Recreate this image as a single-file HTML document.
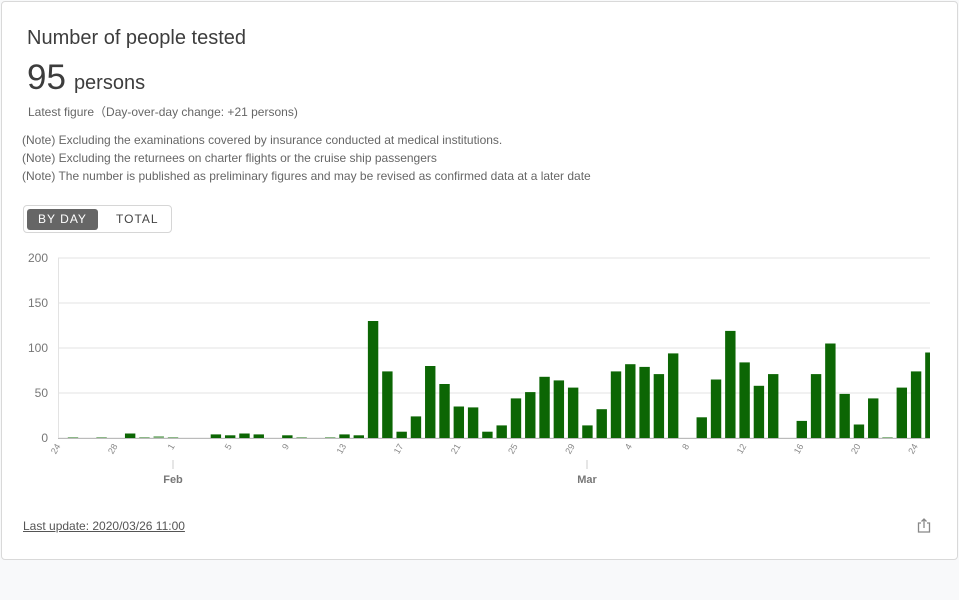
<!DOCTYPE html>
<html><head><meta charset="utf-8"><style>
body{margin:0;width:959px;height:600px;background:#f8f9fa;font-family:"Liberation Sans",Arial,sans-serif;overflow:hidden;position:relative}
.card{position:absolute;left:1px;top:1px;width:955px;height:557px;background:#fff;border:1px solid #d9d9d9;border-radius:4px}
.t{position:absolute;left:25px;top:25px;font-size:20px;color:#3d3d3d}
.n{position:absolute;left:25px;top:56px;font-size:35px;color:#3d3d3d}
.n span{font-size:20px;margin-left:8px}
.lf{position:absolute;left:26px;top:101px;font-size:12px;color:#666}
.notes{position:absolute;left:20px;top:129px;font-size:12px;color:#666;line-height:18px}
.tg{position:absolute;left:21px;top:203px;width:149px;height:28px;border:1px solid #d6d6d6;border-radius:4px;box-sizing:border-box}
.b1{position:absolute;left:3px;top:3px;width:71px;height:21px;background:#666;border-radius:3px;color:#fff;font-size:12px;letter-spacing:1px;text-align:center;line-height:21px}
.b2{position:absolute;left:92px;top:3px;font-size:12px;letter-spacing:1px;color:#444;line-height:21px}
.lu{position:absolute;left:21px;top:517px;font-size:12px;color:#555;text-decoration:underline}
</style></head><body>
<div class="card">
<div class="t">Number of people tested</div>
<div class="n">95<span>persons</span></div>
<div class="lf">Latest figure（Day-over-day change: +21 persons)</div>
<div class="notes">(Note) Excluding the examinations covered by insurance conducted at medical institutions.<br>(Note) Excluding the returnees on charter flights or the cruise ship passengers<br>(Note) The number is published as preliminary figures and may be revised as confirmed data at a later date</div>
<div class="tg"><div class="b1">BY DAY</div><div class="b2">TOTAL</div></div>
<div class="lu">Last update: 2020/03/26 11:00</div>
<svg style="position:absolute;left:914px;top:515px" width="16" height="18" viewBox="0 0 16 18"><path d="M5 6H2.5v9h11V6H11" fill="none" stroke="#888" stroke-width="1.3"/><path d="M8 11V2M5.5 4.5L8 2l2.5 2.5" fill="none" stroke="#888" stroke-width="1.3"/></svg>
</div>
<svg id="c" style="position:absolute;left:0;top:0" width="959" height="500"></svg>
<script>
var v=[0,1,0,1,0,5,1,2,1,0,0,4,3,5,4,0,3,1,0,1,4,3,130,74,7,24,80,60,35,34,7,14,44,51,68,64,56,14,32,74,82,79,71,94,0,23,65,119,84,58,71,0,19,71,105,49,15,44,1,56,74,95];
var s='';
[0,50,100,150,200].forEach(function(g){var y=438-g*0.9;s+='<line x1="58" x2="930" y1="'+y+'" y2="'+y+'" stroke="#e3e3e3"/>';s+='<text x="48" y="'+(y+4)+'" text-anchor="end" font-size="12" fill="#777" font-family="Liberation Sans,sans-serif">'+g+'</text>';});
s+='<line x1="58.5" x2="58.5" y1="258" y2="438" stroke="#e3e3e3"/>';
s+='<defs><clipPath id="k"><rect x="58" y="250" width="872" height="190"/></clipPath></defs><g clip-path="url(#k)">';
v.forEach(function(d,i){var cx=58.7+14.29*i;var h=d*0.9;if(d>0){s+='<rect x="'+(cx-5.2)+'" y="'+(438-h)+'" width="10.4" height="'+h+'" fill="'+(d<=2?'#7fb07a':'#0c6604')+'"/>';}});
s+='</g><line x1="58" x2="930" y1="438.5" y2="438.5" stroke="#bbb"/>';
var L=['24','28','1','5','9','13','17','21','25','29','4','8','12','16','20','24'];
L.forEach(function(t,j){var cx=58.7+14.29*4*j;s+='<text transform="translate('+(cx+2)+',446) rotate(-60)" text-anchor="end" font-size="9" fill="#888" font-family="Liberation Sans,sans-serif">'+t+'</text>';});
[[173,'Feb'],[587,'Mar']].forEach(function(m){s+='<line x1="'+m[0]+'" x2="'+m[0]+'" y1="460" y2="469" stroke="#ccc"/><text x="'+m[0]+'" y="483" text-anchor="middle" font-size="11" font-weight="bold" fill="#777" font-family="Liberation Sans,sans-serif">'+m[1]+'</text>';});
document.getElementById('c').innerHTML=s;
</script>
</body></html>
